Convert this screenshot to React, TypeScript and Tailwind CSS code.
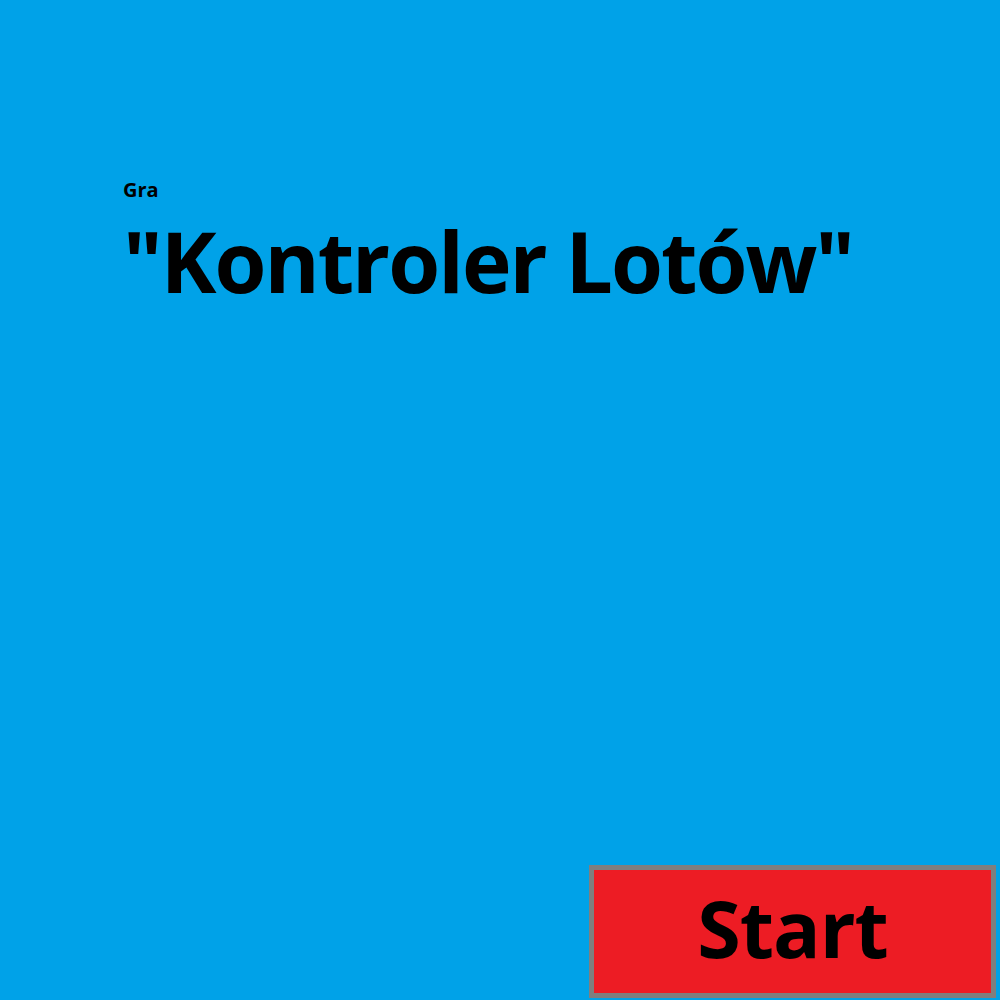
export default function App() {
  return (
    <div className="w-[1000px] h-[1000px] bg-[#00a2e8] flex flex-col relative overflow-hidden" style={{ fontFamily: '"Open Sans", sans-serif' }}>
      <div className="pl-[123px] pt-[176px]">
        <div className="text-[20px] font-bold leading-[28px] text-black">Gra</div>
        <div className="text-[84px] font-bold leading-[100px] text-black tracking-[-2px] mt-[7px] whitespace-nowrap">"Kontroler Lotów"</div>
      </div>
      <div className="flex-1" />
      <div className="flex justify-end pr-[4px] pb-[2px]">
        <button className="w-[407px] h-[133px] bg-[#ed1c24] border-[5px] border-[#7f7f7f] flex items-center justify-center text-black text-[79px] font-bold leading-none tracking-[-1px] pb-[8px]">
          Start
        </button>
      </div>
    </div>
  );
}
